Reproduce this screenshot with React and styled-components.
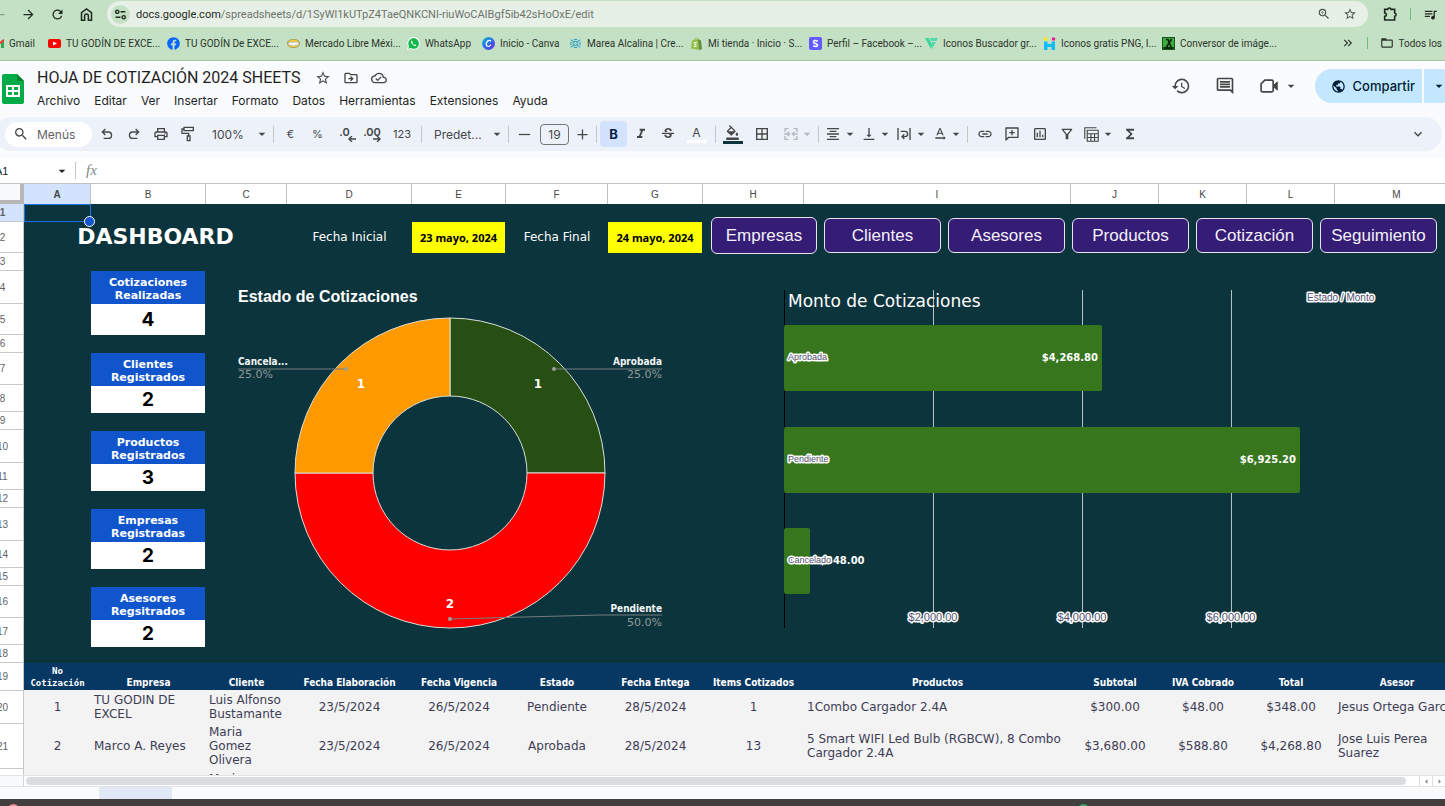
import React, { useState } from "react";
import styled, { createGlobalStyle } from "styled-components";
import {
  MdArrowBack,
  MdArrowForward,
  MdRefresh,
  MdZoomIn,
  MdStarBorder,
  MdQueueMusic,
  MdOutlineDriveFileMove,
  MdOutlineCloudDone,
  MdHistory,
  MdOutlineComment,
  MdPublic,
  MdSearch,
  MdOutlinePrint,
  MdFormatItalic,
  MdStrikethroughS,
  MdFormatColorFill,
  MdBorderAll,
  MdFormatAlignCenter,
  MdVerticalAlignBottom,
  MdTextRotationNone,
  MdInsertLink,
  MdOutlineInsertChart,
  MdOutlineFilterAlt,
  MdFunctions,
  MdKeyboardArrowDown,
  MdArrowDropDown,
  MdArrowLeft,
  MdArrowRight,
  MdFolderOpen,
  MdKeyboardDoubleArrowRight,
} from "react-icons/md";
import { FaFacebook } from "react-icons/fa";

const uiFont = `Inter, Roboto, sans-serif`;
const chromeFont = `Roboto, "Open Sans", sans-serif`;
const sheetFont = `"DejaVu Sans", Verdana, sans-serif`;
const condensedFont = `"DejaVu Sans Condensed", "DejaVu Sans", sans-serif`;
const arial = `"Liberation Sans", Arial, sans-serif`;

// column widths in the grid, same for the heads and the table
const columns = [
  ["A", 67],
  ["B", 115],
  ["C", 81],
  ["D", 125],
  ["E", 94],
  ["F", 102],
  ["G", 95],
  ["H", 101],
  ["I", 267],
  ["J", 88],
  ["K", 88],
  ["L", 88],
  ["M", 124],
];
const columnTemplate = columns.map(([, w]) => `${w}px`).join(" ");

const rowHeights = [
  18, 31, 18, 33, 31, 18, 32, 27, 18, 33, 27, 18, 33, 27, 18, 32, 27, 18, 28,
  33, 45, 50,
];

const GlobalStyle = createGlobalStyle`
  * {
    box-sizing: border-box;
  }
  body {
    margin: 0;
    overflow: hidden;
    background: #ffffff;
    font-family: ${uiFont};
  }
  button {
    font: inherit;
    color: inherit;
    border: 0;
    padding: 0;
    background: none;
    cursor: pointer;
  }
  svg {
    flex-shrink: 0;
  }
`;

const Page = styled.div`
  display: flex;
  flex-direction: column;
  height: 100vh;
  overflow: hidden;
`;

/* ---------- browser ---------- */
const AddressBar = styled.div`
  display: flex;
  align-items: center;
  height: 28px;
  background: #c5e1c5;
  color: #1f2a1f;
  font-family: ${chromeFont};
`;
const NavButton = styled.button`
  display: flex;
  align-items: center;
  justify-content: center;
  width: 29px;
  height: 28px;
  font-size: 15px;
  color: ${({ $dim }) => ($dim ? "#8aa08a" : "#1f2a1f")};
`;
const NavButtons = styled.div`
  display: flex;
  margin-left: -15px;
  margin-right: 6px;
`;
const UrlPill = styled.div`
  display: flex;
  align-items: center;
  flex: 1;
  height: 26px;
  padding: 0 11px 0 4px;
  border-radius: 13px;
  background: #e7f0e7;
`;
const SiteBadge = styled.button`
  display: flex;
  align-items: center;
  justify-content: center;
  width: 19px;
  height: 19px;
  border-radius: 50%;
  background: #c5e1c5;
`;
const Url = styled.span`
  flex: 1;
  margin-left: 6px;
  font-size: 11px;
  color: #6b746b;
  b {
    font-weight: 400;
    color: #1f2a1f;
  }
`;
const PillButton = styled.button`
  display: flex;
  margin-left: 12px;
  font-size: 14px;
  color: #4a544a;
`;
const BarEnd = styled.div`
  display: flex;
  align-items: center;
  gap: 12px;
  padding: 0 7px 0 14px;
  font-size: 15px;
`;
const GreenRule = styled.span`
  width: 1px;
  height: 12px;
  background: #6dbb74;
`;
const Bookmarks = styled.nav`
  display: flex;
  align-items: center;
  height: 33px;
  padding-bottom: 2px;
  padding-right: 3px;
  border-bottom: 1px solid #a9c4a9;
  background: #c5e1c5;
  font-family: ${chromeFont};
  font-size: 10px;
  color: #2b352b;
`;
const Bookmark = styled.a`
  display: flex;
  align-items: center;
  flex-shrink: 0;
  gap: 5px;
  width: ${({ $w }) => $w}px;
  margin-left: ${({ $cut }) => ($cut ? "-9px" : "0")};
  color: inherit;
  text-decoration: none;
  white-space: nowrap;
`;
const BookmarksEnd = styled.div`
  display: flex;
  align-items: center;
  gap: 12px;
  margin-left: auto;
  white-space: nowrap;
`;
const AllBookmarks = styled.a`
  display: flex;
  align-items: center;
  gap: 5px;
  color: inherit;
  text-decoration: none;
`;

/* ---------- document header ---------- */
const Header = styled.header`
  display: flex;
  align-items: flex-start;
  height: 56px;
  background: #f9fbfd;
  color: #444746;
`;
const Logo = styled.svg`
  width: 22px;
  height: 31px;
  margin: 12px 0 0 2px;
`;
const Names = styled.div`
  flex: 1;
  margin: 5px 0 0 13px;
`;
const TitleRow = styled.div`
  display: flex;
  align-items: center;
  gap: 12px;
  height: 24px;
  font-size: 16px;
`;
const Title = styled.h1`
  margin: 0 3px 0 0;
  font-family: Roboto, ${uiFont};
  font-size: 16px;
  font-weight: 400;
  line-height: 24px;
  color: #1f1f1f;
  white-space: nowrap;
`;
const Menus = styled.div`
  display: flex;
  gap: 14px;
`;
const MenuButton = styled.button`
  height: 20px;
  font-size: 12px;
  color: #1f1f1f;
`;
const HeaderTools = styled.div`
  display: flex;
  align-items: center;
  gap: 24px;
  height: 36px;
  margin-top: 7px;
  font-size: 20px;
`;
const MeetButton = styled.button`
  display: flex;
  align-items: center;
  gap: 4px;
`;
const Share = styled.div`
  display: flex;
  gap: 2px;
  height: 34px;
  margin-left: -8px;
  margin-right: -13px;
  font-size: 13px;
  font-weight: 500;
  color: #001d35;
`;
const ShareButton = styled.button`
  display: flex;
  align-items: center;
  gap: 7px;
  padding: 0 7px 0 16px;
  border-radius: 17px 0 0 17px;
  background: #c2e7ff;
`;
const ShareMore = styled.button`
  width: 34px;
  padding: 2px 5px 0 0;
  border-radius: 0 17px 17px 0;
  background: #c2e7ff;
`;

/* ---------- toolbar ---------- */
const ToolbarWrap = styled.div`
  height: 41px;
  padding-right: 3px;
  background: #f9fbfd;
`;
const Toolbar = styled.div`
  display: flex;
  align-items: center;
  height: 34px;
  margin-left: -6px;
  padding: 0 11px;
  border-radius: 17px;
  background: #edf2fa;
  color: #444746;
  font-size: 12px;
`;
const MenuSearch = styled.label`
  display: flex;
  align-items: center;
  gap: 8px;
  width: 87px;
  height: 25px;
  margin-right: 1px;
  padding-left: 8px;
  border-radius: 13px;
  background: #ffffff;
  input {
    width: 50px;
    padding: 0;
    border: 0;
    outline: 0;
    background: none;
    font: 12px ${uiFont};
    color: #5f6368;
  }
  input::placeholder {
    color: #5f6368;
    opacity: 1;
  }
`;
const ToolButton = styled.button`
  display: flex;
  align-items: center;
  justify-content: center;
  flex-shrink: 0;
  width: ${({ $w }) => $w || 27}px;
  height: 26px;
  border-radius: 4px;
  color: ${({ $off }) => ($off ? "#b4b8bd" : "#444746")};
  background: ${({ $on }) => ($on ? "#d3e3fd" : "none")};
  font-size: ${({ $text }) => ($text ? 11 : 16)}px;
`;
const DropButton = styled(ToolButton)`
  justify-content: space-between;
  padding-left: ${({ $pad }) => $pad || 3}px;
  font-size: 16px;
  span {
    font-size: 12px;
  }
`;
const Divider = styled.span`
  width: 1px;
  height: 17px;
  margin: 0 3px;
  background: #c7c7c7;
`;
const SizeInput = styled.input`
  width: 29px;
  height: 21px;
  margin: 0 3px;
  padding: 0;
  border: 1px solid #747775;
  border-radius: 4px;
  background: none;
  text-align: center;
  font: 12px ${uiFont};
  color: #444746;
`;
const BoldMark = styled.b`
  font-size: 13px;
  color: #041e49;
`;
const Swatch = styled.span`
  display: flex;
  flex-direction: column;
  align-items: center;
  font-size: ${({ $letter }) => ($letter ? 12 : 15)}px;
  line-height: 13px;
  &::after {
    content: "";
    width: 20px;
    height: 3px;
    margin-top: 1px;
    background: ${({ $color }) => $color};
  }
`;
const Collapse = styled(ToolButton)`
  margin-left: auto;
`;

/* ---------- formula bar ---------- */
const FormulaBar = styled.div`
  display: flex;
  align-items: center;
  height: 25px;
  background: #ffffff;
  color: #5f6368;
`;
const NameBox = styled.button`
  display: flex;
  align-items: center;
  justify-content: space-between;
  width: 77px;
  height: 20px;
  margin-left: -5px;
  padding-right: 2px;
  font-family: ${arial};
  font-size: 11px;
  color: #202124;
`;
const Fx = styled.span`
  margin-left: 7px;
  font-family: "Liberation Serif", serif;
  font-style: italic;
  font-size: 15px;
  color: #80868b;
`;

/* ---------- grid ---------- */
const ColumnHeads = styled.div`
  display: grid;
  grid-template-columns: 24px ${columnTemplate};
  flex-shrink: 0;
  height: 21px;
  border-top: 1px solid #c0c0c0;
  font-family: ${arial};
  font-size: 10px;
  color: #444746;
`;
const Corner = styled.div`
  border-right: 4px solid #b7b7b7;
  border-bottom: 4px solid #b7b7b7;
  background: #f8f9fa;
`;
const ColumnHead = styled.div`
  display: flex;
  align-items: center;
  justify-content: center;
  border-right: 1px solid #c0c0c0;
  background: ${({ $active }) => ($active ? "#d3e3fd" : "#ffffff")};
  font-weight: ${({ $active }) => ($active ? 700 : 400)};
`;
const SheetBody = styled.main`
  display: flex;
  flex: 1;
  min-height: 0;
  overflow: hidden;
`;
const RowHeads = styled.div`
  flex-shrink: 0;
  width: 42px;
  margin-left: -18px;
  font-family: ${arial};
  font-size: 10px;
  color: #5f6368;
`;
const RowHead = styled.div`
  display: flex;
  align-items: center;
  justify-content: center;
  height: ${({ $h }) => $h}px;
  border-bottom: 1px solid #c9c9c9;
  border-right: 1px solid #c9c9c9;
  background: ${({ $active }) => ($active ? "#d3e3fd" : "#ffffff")};
  font-weight: ${({ $active }) => ($active ? 700 : 400)};
`;
const Canvas = styled.div`
  position: relative;
  flex: 1;
  min-width: 0;
  background: #f3f3f3;
`;
const ActiveCell = styled.div`
  position: absolute;
  top: 0;
  left: 0;
  width: 67px;
  height: 18px;
  border: 1px solid #1a73e8;
  &::after {
    content: "";
    position: absolute;
    right: -5px;
    bottom: -6px;
    width: 9px;
    height: 9px;
    border: 1px solid #ffffff;
    border-radius: 50%;
    background: #1155cc;
  }
`;
const Dashboard = styled.section`
  height: 459px;
  padding-top: 12px;
  background: #0c343d;
  color: #ffffff;
  font-family: ${sheetFont};
  overflow: hidden;
`;
const TopRow = styled.div`
  display: grid;
  grid-template-columns: 263px 125px 94px 102px 95px 1fr;
  align-items: center;
  height: 42px;
  margin-bottom: 13px;
  text-align: center;
`;
const DashTitle = styled.h2`
  margin: 0;
  font-size: 22px;
  line-height: 28px;
`;
const DateLabel = styled.label`
  font-size: 12px;
`;
const DateInput = styled.input`
  width: calc(100% - 1px);
  height: 31px;
  padding: 0;
  border: 0;
  border-radius: 0;
  background: #ffff00;
  text-align: center;
  font: bold 11px "Noto Sans", ${sheetFont};
  color: #000000;
`;
const NavRow = styled.div`
  display: flex;
  align-items: center;
  align-self: start;
  gap: 7px;
  height: 39px;
  padding: 0 8px;
`;
const SheetLink = styled.button`
  flex: ${({ $first }) => ($first ? "0 0 106px" : "1")};
  height: ${({ $first }) => ($first ? 37 : 35)}px;
  border: 1px solid #e8e4f0;
  border-radius: 6px;
  background: #351c75;
  font-family: ${arial};
  font-size: 17px;
  color: #f3f0fa;
`;
const Panels = styled.div`
  display: flex;
  align-items: flex-start;
  padding-left: 67px;
`;
const Cards = styled.div`
  display: flex;
  flex-direction: column;
  gap: 18px;
  width: 115px;
  padding-right: 1px;
  text-align: center;
`;
const CardLabel = styled.div`
  height: 33px;
  padding-top: 5px;
  background: #1155cc;
  font-size: 11px;
  font-weight: 700;
  line-height: 13px;
`;
const CardValue = styled.div`
  height: ${({ $tall }) => ($tall ? 31 : 27)}px;
  background: #ffffff;
  font-family: ${uiFont};
  font-size: 19px;
  font-weight: 700;
  line-height: ${({ $tall }) => ($tall ? 32 : 28)}px;
  color: #000000;
`;
const ChartSvg = styled.svg`
  flex-shrink: 0;
  font-family: ${sheetFont};
  .title {
    font: bold 16px ${arial};
    fill: #ffffff;
  }
  .big {
    font-size: 17px;
    fill: #ffffff;
  }
  .name {
    font-family: ${condensedFont};
    font-size: 10px;
    font-weight: 700;
    fill: #f1f5f5;
  }
  .value {
    font-size: 10px;
    font-weight: 700;
    fill: #ffffff;
  }
  .pct {
    font-size: 11px;
    fill: #8f9a9c;
  }
  .count {
    font-size: 12px;
    font-weight: 700;
    fill: #ffffff;
    text-anchor: middle;
  }
  .halo {
    font: 10px ${arial};
    fill: #50506e;
    stroke: #ffffff;
    stroke-width: 3px;
    stroke-linejoin: round;
    paint-order: stroke;
  }
  .small {
    font-size: 9px;
  }
  .tick {
    font-size: 11px;
    text-anchor: middle;
  }
  .end {
    text-anchor: end;
  }
`;

const Quotes = styled.table`
  width: 1435px;
  table-layout: fixed;
  border-collapse: collapse;
  font-family: ${sheetFont};
  font-size: 12px;
  line-height: 14px;
  color: #3d3d55;
  th {
    height: 27px;
    padding: 0 0 1px;
    background: #073763;
    vertical-align: bottom;
    font-family: ${condensedFont};
    font-size: 10px;
    line-height: 13px;
    color: #ffffff;
    white-space: nowrap;
  }
  th:first-child {
    font-family: "DejaVu Sans Mono", monospace;
    font-size: 9px;
    line-height: 12px;
  }
`;
const Cell = styled.td`
  height: ${({ $h }) => $h}px;
  padding: 0 3px;
  text-align: ${({ $left }) => ($left ? "left" : "center")};
  white-space: ${({ $nowrap }) => ($nowrap ? "nowrap" : "normal")};
`;

/* ---------- bottom ---------- */
const ScrollRow = styled.div`
  display: flex;
  flex-shrink: 0;
  height: 12px;
  border-top: 1px solid #e3e3e3;
  border-bottom: 1px solid #e3e3e3;
  background: #ffffff;
`;
const ScrollCorner = styled.div`
  width: 24px;
  border-right: 1px solid #d5d5d5;
  background: #f8f9fa;
`;
const ScrollTrack = styled.div`
  flex: 1;
  padding: 1px 13px 1px 2px;
`;
const ScrollThumb = styled.div`
  height: 8px;
  border-radius: 4px;
  background: #dadce0;
`;
const ScrollArrow = styled.button`
  display: flex;
  align-items: center;
  justify-content: center;
  width: 13px;
  border-left: 1px solid #dadce0;
  font-size: 11px;
  color: #80868b;
`;
const TabStrip = styled.div`
  flex-shrink: 0;
  height: 12px;
  padding-left: 99px;
  background: #f9fbfd;
`;
const ActiveTab = styled.div`
  width: 73px;
  height: 12px;
  background: #e1e9f7;
`;
const Taskbar = styled.footer`
  display: flex;
  justify-content: space-between;
  flex-shrink: 0;
  height: 7px;
  padding: 5px 356px 0 8px;
  background: #41403f;
  overflow: hidden;
`;
const TaskDot = styled.span`
  width: 11px;
  height: 11px;
  border-radius: 50%;
  background: ${({ $color }) => $color};
`;

/* ---------- drawn icons ---------- */
const Line = ({ size = 16, width = 2, children }) => (
  <svg
    width={size}
    height={size}
    viewBox="0 0 24 24"
    fill="none"
    stroke="currentColor"
    strokeWidth={width}
  >
    {children}
  </svg>
);
const HomeIcon = () => (
  <Line size={15} width={2.4}>
    <path d="M4 21V9l8-6 8 6v12h-5v-7a3 3 0 0 0-6 0v7z" />
  </Line>
);
const TuneIcon = () => (
  <Line size={13} width={2.6}>
    <circle cx="6" cy="7" r="3" />
    <path d="M12 7h9M3 17h9" />
    <circle cx="18" cy="17" r="3" />
  </Line>
);
const PuzzleIcon = () => (
  <Line size={16} width={2.4}>
    <path d="M4 5h4.500a2.500 2 0 0 1 5 0H19v5.500a2 2.500 0 0 1 0 5V21H4v-5.500a2.500 2.500 0 0 0 0-5z" />
  </Line>
);
const MeetIcon = () => (
  <Line size={20}>
    <path d="M7 5h8.500a1.500 1.500 0 0 1 1.500 1.500v11a1.500 1.500 0 0 1-1.500 1.500H4a1.500 1.500 0 0 1-1.500-1.500V9.500z" />
    <path d="M18 10.500l4-3.500v10l-4-3.500z" fill="currentColor" strokeWidth="1" />
  </Line>
);
const UndoIcon = ({ flip }) => (
  <Line>
    <g transform={flip ? "matrix(-1 0 0 1 24 0)" : undefined}>
      <path d="M9.500 4.500L5 9l4.500 4.500M5.500 9H14a4.800 4.800 0 0 1 0 9.600H7" />
    </g>
  </Line>
);
const RollerIcon = () => (
  <Line>
    <path d="M6 2h14v5H6zM6 4.500H3V11h10v4" />
    <path d="M11 15h4v7h-4z" />
  </Line>
);
const MergeIcon = () => (
  <Line>
    <path d="M8 4H3v5M16 4h5v5M3 15v5h5M21 15v5h-5M2 12h7M22 12h-7" />
    <path d="M7 9l3 3-3 3M17 9l-3 3 3 3" />
  </Line>
);
const WrapIcon = () => (
  <Line>
    <path d="M3 3v18M21 3v18M7 8h6.500a4 4 0 0 1 0 8H9M12.500 12.500L9 16l3.500 3.500" />
  </Line>
);
const AddCommentIcon = () => (
  <Line>
    <path d="M3 21V3h18v14H7z" strokeLinejoin="round" />
    <path d="M12 6v8M8 10h8" />
  </Line>
);
const TableViewsIcon = () => (
  <Line size={17} width={1.600}>
    <path d="M2.500 18V2.500H19" />
    <path d="M6 6h15.500v15.500H6zM6 11h15.500M6 16.300h15.500M11.200 11v10.500M16.300 11v10.500" />
  </Line>
);

const DecimalMark = styled.span`
  display: flex;
  flex-direction: column;
  align-items: flex-end;
  font-size: 11px;
  font-weight: 600;
  line-height: 10px;
  svg {
    margin-top: -1px;
    margin-right: ${({ $less }) => ($less ? "-6px" : "0")};
  }
`;
const DecimalIcon = ({ less }) => (
  <DecimalMark $less={less}>
    {less ? ".0" : ".00"}
    <svg width="8" height="6" viewBox="0 0 8 6" fill="none" stroke="currentColor">
      <path d={less ? "M8 3H1M4 0L1 3l3 3" : "M0 3h7M4 0l3 3-3 3"} strokeWidth="1.400" />
    </svg>
  </DecimalMark>
);

const Favicon = ({ kind }) => {
  if (kind === "facebook") return <FaFacebook size={13} color="#0866ff" />;
  return (
    <svg width="13" height="13" viewBox="0 0 13 13">
      {kind === "youtube" && (
        <>
          <rect y="2" width="13" height="9" rx="2" fill="#ff0000" />
          <path d="M5 4.500l4 2-4 2z" fill="#fff" />
        </>
      )}
      {kind === "shopify" && (
        <>
          <path d="M2 3.500l6-1.500 1 11-8-1.500z" fill="#95bf47" />
          <path d="M8 2l3 1.500 1 8.500-3 1z" fill="#5e8e3e" />
          <path d="M4 3.500Q4.500 1 6.500.8 8 1 8 3" fill="none" stroke="#95bf47" strokeWidth=".9" />
          <path d="M6.700 5.600Q4.300 5 4.400 6.500q1.800 1.200 1.700 2.300-.6 1.300-2.200.3" fill="none" stroke="#fff" strokeWidth="1.100" />
        </>
      )}
      {kind === "gmail" && (
        <>
          <path d="M10 4l3-2v9h-3z" fill="#34a853" />
          <path d="M1 2l5.500 4.500L13 2v2.500L6.500 9 1 4.500z" fill="#ea4335" />
        </>
      )}
      {kind === "ml" && (
        <>
          <ellipse cx="6.500" cy="6.500" rx="6.500" ry="4.500" fill="#8a8a5c" />
          <ellipse cx="6.500" cy="6.500" rx="6" ry="4" fill="#f6cf3c" />
          <path d="M.7 6q3-1.600 5.800-.8Q9.500 4.200 12.300 6q-1 3-5.800 3T.7 6z" fill="#f4f4f4" stroke="#6d7391" strokeWidth=".400" />
        </>
      )}
      {kind === "whatsapp" && (
        <>
          <path d="M0 13l1-4a6.300 6.300 0 1 1 3 3z" fill="#fff" />
          <circle cx="6.600" cy="6.400" r="5.300" fill="#12b84c" />
          <path d="M1.300 11.700l1-3.500 2.500 2.500z" fill="#12b84c" />
          <path d="M4.500 3.600q-1.600 1.600 1 4t4 1l-1.600-1.300-.8.600q-1.200-.6-1.600-1.800l.5-.7z" fill="#fff" />
        </>
      )}
      {kind === "canva" && (
        <>
          <defs>
            <linearGradient id="canva" x1="0" y1="0" x2="1" y2="1">
              <stop offset="0" stopColor="#00c4cc" />
              <stop offset=".6" stopColor="#3a5be8" />
              <stop offset="1" stopColor="#7d2ae8" />
            </linearGradient>
          </defs>
          <circle cx="6.500" cy="6.500" r="6.500" fill="url(#canva)" />
          <path d="M8.800 4.600Q8.500 3 7 3.300 4.500 4 4.300 7q0 2.600 2 2.500 1.500 0 2.500-1.700" fill="none" stroke="#fff" strokeWidth="1.200" />
        </>
      )}
      {kind === "marea" && (
        <g fill="none" stroke="#2b8c9c" strokeWidth=".8">
          <rect x="1" y="2" width="11" height="9" fill="#a6dcd8" stroke="none" />
          <circle cx="6.500" cy="6.500" r="2" />
          <path d="M2 3l3 2M11 3L8 5M2 10l3-2M11 10L8 8M2 5v3M11 5v3M5 2.500h3M5 10.500h3" />
        </g>
      )}
      {kind === "stripe" && (
        <>
          <rect width="13" height="13" rx="2" fill="#635bff" />
          <path d="M8.800 4.200Q4.500 2.500 4.500 4.900q0 1 2 1.600t2 1.600q0 2.300-4.300.7" fill="none" stroke="#fff" strokeWidth="1.600" />
        </>
      )}
      {kind === "vector" && (
        <>
          <path d="M0 1h3.500L7 8l-1 4z" fill="#3bd49b" />
          <path d="M4.500 1H13l-1.400 3H6zM6.500 5H11L7 12V8z" fill="#52dcaa" />
        </>
      )}
      {kind === "png" && (
        <g>
          <circle cx="2.500" cy="2" r="1.800" fill="#ffe600" />
          <circle cx="10.500" cy="2" r="1.800" fill="#f0148c" />
          <path d="M1 4.500h3.500V7h4V4.500H12V13H8.500v-3h-4v3H1z" fill="#14bdf4" />
        </g>
      )}
      {kind === "convert" && (
        <g>
          <rect width="13" height="13" fill="#145a1e" />
          <rect x="1" y="1" width="11" height="9" fill="#3cab3c" />
          <path d="M4 2.500h2L9 10M9.500 2L4.500 10M2 11h9" fill="none" stroke="#0a1c0a" strokeWidth="1.600" />
        </g>
      )}
    </svg>
  );
};

const bookmarks = [
  ["youtube", "TU GODÍN DE EXCE...", 119],
  ["facebook", "TU GODÍN De EXCE...", 120],
  ["ml", "Mercado Libre Méxi...", 120],
  ["whatsapp", "WhatsApp", 75],
  ["canva", "Inicio - Canva", 87],
  ["marea", "Marea Alcalina | Cre...", 121],
  ["shopify", "Mi tienda · Inicio · S...", 119],
  ["stripe", "Perfil – Facebook –...", 116],
  ["vector", "Iconos Buscador gr...", 118],
  ["png", "Iconos gratis PNG, I...", 119],
  ["convert", "Conversor de imáge...", 119],
];

const menus = [
  "Archivo",
  "Editar",
  "Ver",
  "Insertar",
  "Formato",
  "Datos",
  "Herramientas",
  "Extensiones",
  "Ayuda",
];

const cards = [
  ["Cotizaciones", "Realizadas", 4],
  ["Clientes", "Registrados", 2],
  ["Productos", "Registrados", 3],
  ["Empresas", "Registradas", 2],
  ["Asesores", "Regsitrados", 2],
];

const sheetLinks = [
  "Empresas",
  "Clientes",
  "Asesores",
  "Productos",
  "Cotización",
  "Seguimiento",
];

const quoteHeads = [
  "Empresa",
  "Cliente",
  "Fecha Elaboración",
  "Fecha Vigencia",
  "Estado",
  "Fecha Entega",
  "Items Cotizados",
  "Productos",
  "Subtotal",
  "IVA Cobrado",
  "Total",
  "Asesor",
];

const quotes = [
  [
    "1",
    "TU GODIN DE EXCEL",
    "Luis Alfonso Bustamante",
    "23/5/2024",
    "26/5/2024",
    "Pendiente",
    "28/5/2024",
    "1",
    "1Combo Cargador 2.4A",
    "$300.00",
    "$48.00",
    "$348.00",
    "Jesus Ortega Garcia",
  ],
  [
    "2",
    "Marco A. Reyes",
    "Maria Gomez Olivera",
    "23/5/2024",
    "26/5/2024",
    "Aprobada",
    "28/5/2024",
    "13",
    "5 Smart WIFI Led Bulb (RGBCW), 8 Combo Cargador 2.4A",
    "$3,680.00",
    "$588.80",
    "$4,268.80",
    "Jose Luis Perea Suarez",
  ],
  ["", "", "Maria Gomez Olivera", "", "", "", "", "", "", "", "", "", ""],
];
const leftColumns = [1, 2, 8, 12];

const bars = [
  { name: "Aprobada", value: 4268.8, label: "$4,268.80", y: 54 },
  { name: "Pendiente", value: 6925.2, label: "$6,925.20", y: 156 },
  { name: "Cancelado", value: 348, label: "$348.00", y: 257 },
];
const barWidth = (value) => Math.round((value / 2000) * 149);

const Browser = () => (
  <>
    <AddressBar>
      <NavButtons>
        <NavButton $dim aria-label="Atrás">
          <MdArrowBack />
        </NavButton>
        <NavButton aria-label="Adelante">
          <MdArrowForward />
        </NavButton>
        <NavButton aria-label="Recargar">
          <MdRefresh />
        </NavButton>
        <NavButton aria-label="Inicio">
          <HomeIcon />
        </NavButton>
      </NavButtons>
      <UrlPill>
        <SiteBadge aria-label="Información del sitio">
          <TuneIcon />
        </SiteBadge>
        <Url>
          <b>docs.google.com</b>
          /spreadsheets/d/1SyWl1kUTpZ4TaeQNKCNI-riuWoCAIBgf5ib42sHoOxE/edit
        </Url>
        <PillButton aria-label="Zoom">
          <MdZoomIn />
        </PillButton>
        <PillButton aria-label="Favorito">
          <MdStarBorder />
        </PillButton>
      </UrlPill>
      <BarEnd>
        <PuzzleIcon />
        <GreenRule />
        <MdQueueMusic />
      </BarEnd>
    </AddressBar>
    <Bookmarks>
      <Bookmark href="#" $w={57} $cut>
        <Favicon kind="gmail" />
        Gmail
      </Bookmark>
      {bookmarks.map(([kind, text, w]) => (
        <Bookmark href="#" key={kind} $w={w}>
          <Favicon kind={kind} />
          {text}
        </Bookmark>
      ))}
      <BookmarksEnd>
        <MdKeyboardDoubleArrowRight size={14} />
        <GreenRule />
        <AllBookmarks href="#">
          <MdFolderOpen size={14} />
          Todos los
        </AllBookmarks>
      </BookmarksEnd>
    </Bookmarks>
  </>
);

const DocHeader = () => (
  <Header>
    <Logo viewBox="0 0 22 31">
      <path d="M2 1h13l7 7v21a2 2 0 0 1-2 2H2a2 2 0 0 1-2-2V3a2 2 0 0 1 2-2z" fill="#00ac47" />
      <path d="M15 1l7 7h-7z" fill="#00832d" />
      <path d="M4 12h14v12H4zM6 14v3h4v-3zM12 14v3h4v-3zM6 19v3h4v-3zM12 19v3h4v-3z" fill="#fff" fillRule="evenodd" />
    </Logo>
    <Names>
      <TitleRow>
        <Title>HOJA DE COTIZACIÓN 2024 SHEETS</Title>
        <MdStarBorder />
        <MdOutlineDriveFileMove />
        <MdOutlineCloudDone />
      </TitleRow>
      <Menus>
        {menus.map((name) => (
          <MenuButton key={name}>{name}</MenuButton>
        ))}
      </Menus>
    </Names>
    <HeaderTools>
      <MdHistory />
      <MdOutlineComment />
      <MeetButton aria-label="Meet">
        <MeetIcon />
        <MdArrowDropDown size={16} />
      </MeetButton>
      <Share>
        <ShareButton>
          <MdPublic size={15} />
          Compartir
        </ShareButton>
        <ShareMore aria-label="Más opciones">
          <MdArrowDropDown size={16} />
        </ShareMore>
      </Share>
    </HeaderTools>
  </Header>
);

const Tools = () => {
  const [fontSize, setFontSize] = useState(19);
  const [bold, setBold] = useState(true);
  return (
    <ToolbarWrap>
      <Toolbar>
        <MenuSearch>
          <MdSearch size={16} />
          <input placeholder="Menús" aria-label="Menús" />
        </MenuSearch>
        <ToolButton aria-label="Deshacer">
          <UndoIcon />
        </ToolButton>
        <ToolButton aria-label="Rehacer">
          <UndoIcon flip />
        </ToolButton>
        <ToolButton aria-label="Imprimir">
          <MdOutlinePrint />
        </ToolButton>
        <ToolButton aria-label="Copiar formato">
          <RollerIcon />
        </ToolButton>
        <DropButton $w={69} $pad={11}>
          <span>100%</span>
          <MdArrowDropDown />
        </DropButton>
        <Divider />
        <ToolButton $text>€</ToolButton>
        <ToolButton $text>%</ToolButton>
        <ToolButton aria-label="Menos decimales">
          <DecimalIcon less />
        </ToolButton>
        <ToolButton $w={28} aria-label="Más decimales">
          <DecimalIcon />
        </ToolButton>
        <ToolButton $text $w={32}>
          123
        </ToolButton>
        <Divider />
        <DropButton $w={80} $pad={9}>
          <span>Predet...</span>
          <MdArrowDropDown />
        </DropButton>
        <Divider />
        <ToolButton $w={25} aria-label="Reducir" onClick={() => setFontSize(fontSize - 1)}>
          <Line size={15}>
            <path d="M3 12h18" />
          </Line>
        </ToolButton>
        <SizeInput
          aria-label="Tamaño de fuente"
          value={fontSize}
          onChange={(e) => setFontSize(Number(e.target.value) || 1)}
        />
        <ToolButton $w={21} aria-label="Aumentar" onClick={() => setFontSize(fontSize + 1)}>
          <Line size={15}>
            <path d="M4 12h16M12 4v16" />
          </Line>
        </ToolButton>
        <Divider />
        <ToolButton $on={bold} onClick={() => setBold(!bold)}>
          <BoldMark>B</BoldMark>
        </ToolButton>
        <ToolButton aria-label="Cursiva">
          <MdFormatItalic />
        </ToolButton>
        <ToolButton aria-label="Tachado">
          <MdStrikethroughS />
        </ToolButton>
        <ToolButton $w={31}>
          <Swatch $letter $color="#ffffff">
            A
          </Swatch>
        </ToolButton>
        <Divider />
        <ToolButton aria-label="Color de relleno">
          <Swatch $color="#0c343d">
            <MdFormatColorFill />
          </Swatch>
        </ToolButton>
        <ToolButton $w={31} aria-label="Bordes">
          <MdBorderAll />
        </ToolButton>
        <DropButton $w={38} $pad={6} $off aria-label="Combinar">
          <MergeIcon />
          <MdArrowDropDown />
        </DropButton>
        <Divider />
        <DropButton $w={36} aria-label="Alinear">
          <MdFormatAlignCenter />
          <MdArrowDropDown />
        </DropButton>
        <DropButton $w={35} aria-label="Alinear verticalmente">
          <MdVerticalAlignBottom />
          <MdArrowDropDown />
        </DropButton>
        <DropButton $w={36} aria-label="Ajuste">
          <WrapIcon />
          <MdArrowDropDown />
        </DropButton>
        <DropButton $w={35} aria-label="Rotación">
          <MdTextRotationNone />
          <MdArrowDropDown />
        </DropButton>
        <Divider />
        <ToolButton aria-label="Enlace">
          <MdInsertLink />
        </ToolButton>
        <ToolButton $w={28} aria-label="Comentario">
          <AddCommentIcon />
        </ToolButton>
        <ToolButton aria-label="Gráfico">
          <MdOutlineInsertChart />
        </ToolButton>
        <ToolButton aria-label="Filtro">
          <MdOutlineFilterAlt />
        </ToolButton>
        <DropButton $w={36} aria-label="Vistas">
          <TableViewsIcon />
          <MdArrowDropDown />
        </DropButton>
        <ToolButton aria-label="Funciones">
          <MdFunctions />
        </ToolButton>
        <Collapse aria-label="Ocultar menús">
          <MdKeyboardArrowDown />
        </Collapse>
      </Toolbar>
    </ToolbarWrap>
  );
};

const DonutChart = () => (
  <ChartSvg width="497" height="392" viewBox="0 0 497 392">
    <text className="title" x="32" y="31">
      Estado de Cotizaciones
    </text>
    <g stroke="#d9dfd9" strokeWidth="1">
      <path d="M244 47a155 155 0 0 1 155 155h-78a77 77 0 0 0-77-77z" fill="#274e13" />
      <path d="M399 202a155 155 0 0 1-310 0h78a77 77 0 0 0 154 0z" fill="#ff0000" />
      <path d="M89 202A155 155 0 0 1 244 47v78a77 77 0 0 0-77 77z" fill="#ff9900" />
    </g>
    <g fill="none" stroke="#757d7d">
      <path d="M32 98h108M348 98h108M244 348l150-4h62" />
    </g>
    <g fill="#9e9e9e">
      <circle cx="140" cy="98" r="2" />
      <circle cx="348" cy="98" r="2" />
      <circle cx="244" cy="348" r="2" />
    </g>
    <text className="name" x="32" y="94">
      Cancela...
    </text>
    <text className="pct" x="32" y="107">
      25.0%
    </text>
    <text className="name end" x="456" y="94">
      Aprobada
    </text>
    <text className="pct end" x="456" y="107">
      25.0%
    </text>
    <text className="name end" x="456" y="341">
      Pendiente
    </text>
    <text className="pct end" x="456" y="355">
      50.0%
    </text>
    <text className="count" x="155" y="117">
      1
    </text>
    <text className="count" x="332" y="117">
      1
    </text>
    <text className="count" x="244" y="337">
      2
    </text>
  </ChartSvg>
);

const BarChart = () => (
  <ChartSvg width="742" height="392" viewBox="0 0 742 392">
    <path d="M81.500 19v338" stroke="#000000" />
    <path d="M230.500 19v338M379.500 19v338M528.500 19v338" stroke="#b7c0c2" />
    <text className="big" x="85" y="36">
      Monto de Cotizaciones
    </text>
    {bars.map((bar) => {
      const w = barWidth(bar.value);
      const inside = w > 100;
      return (
        <g key={bar.name}>
          <rect x="81" y={bar.y} width={w} height="66" rx="2" fill="#38761d" />
          <text
            className={inside ? "value end" : "value"}
            x={inside ? 77 + w : 116}
            y={bar.y + 36}
          >
            {bar.label}
          </text>
          <text className="halo small" x="85" y={bar.y + 35}>
            {bar.name}
          </text>
        </g>
      );
    })}
    <text className="halo" x="604" y="30">
      Estado / Monto
    </text>
    <text className="halo tick" x="230" y="350">
      $2,000.00
    </text>
    <text className="halo tick" x="379" y="350">
      $4,000.00
    </text>
    <text className="halo tick" x="528" y="350">
      $6,000.00
    </text>
  </ChartSvg>
);

const QuotesTable = () => (
  <Quotes>
    <colgroup>
      {columns.map(([name, w]) => (
        <col key={name} width={w} />
      ))}
    </colgroup>
    <thead>
      <tr>
        <th>
          No
          <br />
          Cotización
        </th>
        {quoteHeads.map((head) => (
          <th key={head}>{head}</th>
        ))}
      </tr>
    </thead>
    <tbody>
      {quotes.map((row, r) => (
        <tr key={r}>
          {row.map((text, c) => (
            <Cell
              key={c}
              $h={rowHeights[19 + r]}
              $left={leftColumns.includes(c)}
              $nowrap={c === 12 && r === 0}
            >
              {text}
            </Cell>
          ))}
        </tr>
      ))}
    </tbody>
  </Quotes>
);

const Sheet = () => {
  const [from, setFrom] = useState("23 mayo, 2024");
  const [to, setTo] = useState("24 mayo, 2024");
  return (
    <>
      <ColumnHeads>
        <Corner />
        {columns.map(([name]) => (
          <ColumnHead key={name} $active={name === "A"}>
            {name}
          </ColumnHead>
        ))}
      </ColumnHeads>
      <SheetBody>
        <RowHeads>
          {rowHeights.map((h, i) => (
            <RowHead key={i} $h={h} $active={i === 0}>
              {i + 1}
            </RowHead>
          ))}
        </RowHeads>
        <Canvas>
          <Dashboard>
            <TopRow>
              <DashTitle>DASHBOARD</DashTitle>
              <DateLabel htmlFor="from">Fecha Inicial</DateLabel>
              <DateInput id="from" value={from} onChange={(e) => setFrom(e.target.value)} />
              <DateLabel htmlFor="to">Fecha Final</DateLabel>
              <DateInput id="to" value={to} onChange={(e) => setTo(e.target.value)} />
              <NavRow>
                {sheetLinks.map((name, i) => (
                  <SheetLink key={name} $first={i === 0}>
                    {name}
                  </SheetLink>
                ))}
              </NavRow>
            </TopRow>
            <Panels>
              <Cards>
                {cards.map(([top, bottom, value], i) => (
                  <div key={top}>
                    <CardLabel>
                      {top}
                      <br />
                      {bottom}
                    </CardLabel>
                    <CardValue $tall={i === 0}>{value}</CardValue>
                  </div>
                ))}
              </Cards>
              <DonutChart />
              <BarChart />
            </Panels>
          </Dashboard>
          <QuotesTable />
          <ActiveCell />
        </Canvas>
      </SheetBody>
    </>
  );
};

export default function App() {
  return (
    <Page>
      <GlobalStyle />
      <Browser />
      <DocHeader />
      <Tools />
      <FormulaBar>
        <NameBox>
          A1
          <MdArrowDropDown size={16} />
        </NameBox>
        <Divider />
        <Fx>fx</Fx>
      </FormulaBar>
      <Sheet />
      <ScrollRow>
        <ScrollCorner />
        <ScrollTrack>
          <ScrollThumb />
        </ScrollTrack>
        <ScrollArrow aria-label="Izquierda">
          <MdArrowLeft />
        </ScrollArrow>
        <ScrollArrow aria-label="Derecha">
          <MdArrowRight />
        </ScrollArrow>
      </ScrollRow>
      <TabStrip>
        <ActiveTab />
      </TabStrip>
      <Taskbar>
        <TaskDot $color="#f28b94" />
        <TaskDot $color="#35a96b" />
      </Taskbar>
    </Page>
  );
}
